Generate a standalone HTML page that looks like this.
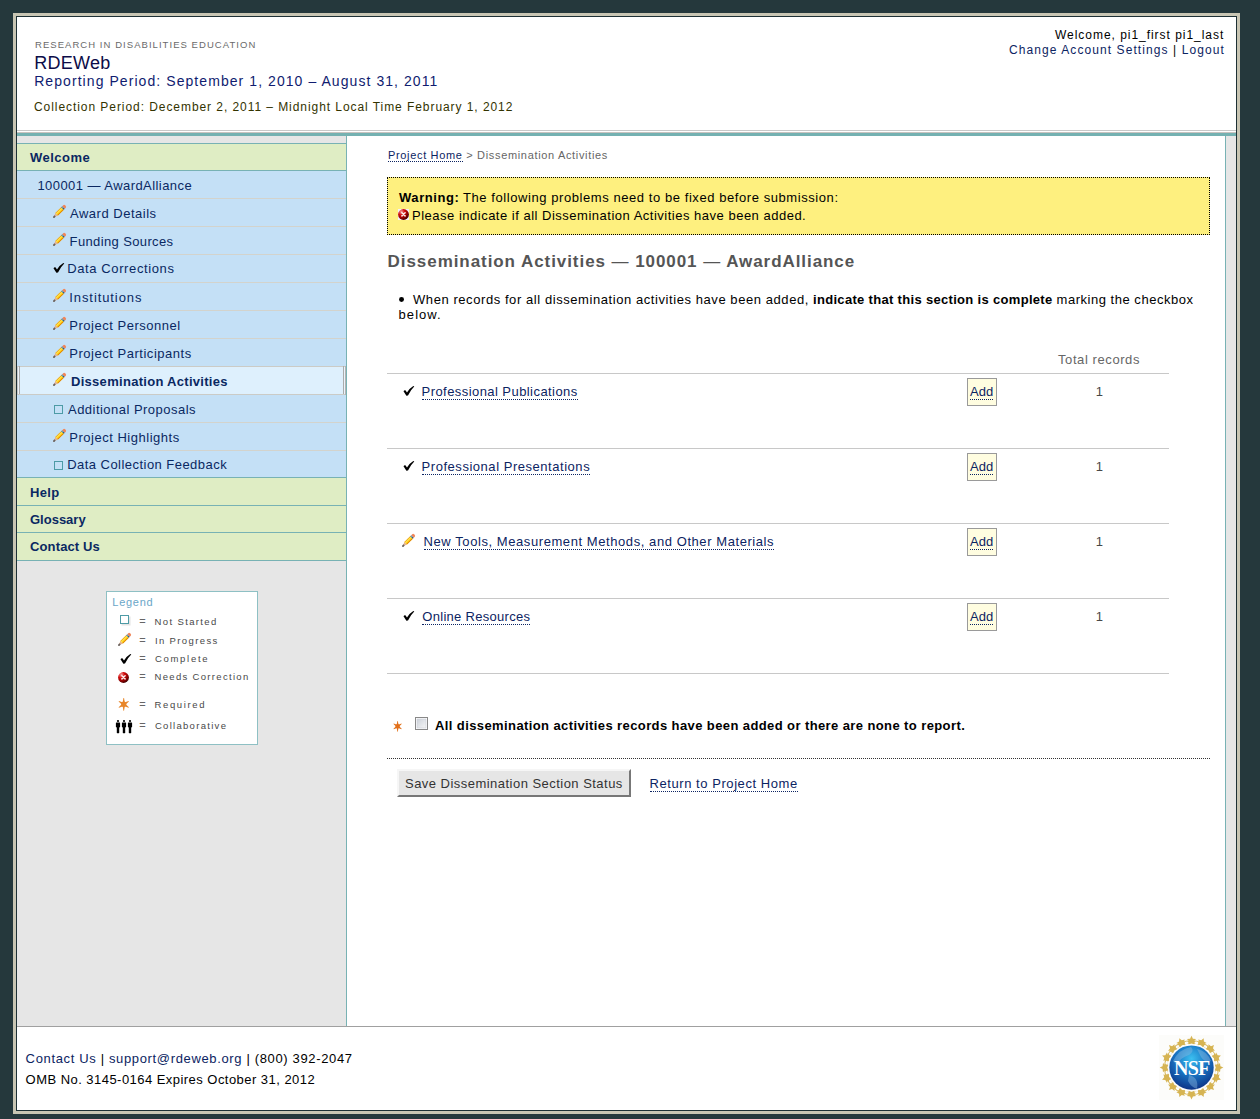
<!DOCTYPE html>
<html><head><meta charset="utf-8">
<style>
*{margin:0;padding:0;box-sizing:border-box}
html,body{width:1260px;height:1119px;overflow:hidden;background:#25383c;font-family:"Liberation Sans",sans-serif}
.a{position:absolute}
.t{position:absolute;white-space:nowrap}
.lk{color:#0c2462}
.dt{border-bottom:1px dotted #0c2462}
.sd{left:17px;width:329px}
.grn{background:#dfedc4}
.blu{background:#c4e0f6}
.tl{background:#78b2b4}
.sep{background:#d3d3cc}
svg{position:absolute;overflow:visible}

</style></head><body>
<div class="a" style="left:13px;top:13px;width:1227px;height:1101px;border:3px solid #c8c5b3"></div>
<div class="a" style="left:16px;top:16px;width:1221px;height:1095px;border:1px solid #1d3035;background:#fff"></div>

<div class="a" style="left:17px;top:130px;width:1219px;height:1px;background:#c8c8c8"></div>
<div class="a" style="left:17px;top:132px;width:1219px;height:1px;background:#c9c3c0"></div>
<div class="a" style="left:17px;top:133px;width:1219px;height:3px;background:#74b1b1"></div>

<div class="a" style="left:17px;top:136px;width:329px;height:890px;background:#e6e6e6"></div>
<div class="a tl" style="left:346px;top:136px;width:1px;height:890px"></div>
<div class="a tl" style="left:1225px;top:136px;width:1px;height:890px"></div>
<div class="a" style="left:1226px;top:136px;width:10px;height:890px;background:#e6e6e6"></div>
<div class="a" style="left:17px;top:1026px;width:1219px;height:1px;background:#a0a0a0"></div>

<div class="a tl sd" style="top:143px;height:1px"></div>
<div class="a grn sd" style="top:144px;height:26px"></div>
<div class="a tl sd" style="top:170px;height:1px"></div>
<div class="a blu sd" style="top:171px;height:306px"></div>
<div class="a sep sd" style="top:198px;height:1px"></div>
<div class="a sep sd" style="top:226px;height:1px"></div>
<div class="a sep sd" style="top:254px;height:1px"></div>
<div class="a sep sd" style="top:282px;height:1px"></div>
<div class="a sep sd" style="top:310px;height:1px"></div>
<div class="a sep sd" style="top:338px;height:1px"></div>
<div class="a sep sd" style="top:366px;height:1px"></div>
<div class="a sep sd" style="top:394px;height:1px"></div>
<div class="a sep sd" style="top:422px;height:1px"></div>
<div class="a sep sd" style="top:450px;height:1px"></div>
<div class="a" style="left:17px;top:367px;width:329px;height:27px;background:#def0fd"></div>
<div class="a" style="left:17px;top:366px;width:329px;height:1px;background:#cbcbc6"></div>
<div class="a" style="left:17px;top:394px;width:329px;height:1px;background:#cbcbc6"></div>
<div class="a" style="left:17px;top:366px;width:1px;height:29px;background:#c6c6c6"></div>
<div class="a" style="left:18px;top:367px;width:1px;height:27px;background:#eaf4fc"></div>
<div class="a" style="left:19px;top:366px;width:1px;height:28px;background:#ababab"></div>
<div class="a" style="left:343px;top:366px;width:1px;height:28px;background:#ababab"></div>
<div class="a" style="left:344px;top:367px;width:1px;height:27px;background:#eaf4fc"></div>
<div class="a" style="left:345px;top:366px;width:1px;height:29px;background:#b4b4b4"></div>
<div class="a tl sd" style="top:477px;height:1px"></div>
<div class="a grn sd" style="top:478px;height:82px"></div>
<div class="a tl sd" style="top:505px;height:1px"></div>
<div class="a tl sd" style="top:532px;height:1px"></div>
<div class="a tl sd" style="top:560px;height:1px"></div>

<div class="a" style="left:106px;top:591px;width:152px;height:154px;background:#fff;border:1px solid #8ec0c4"></div>

<div class="a" style="left:387px;top:177px;width:823px;height:58px;background:#fef07f;border:1px dotted #000"></div>

<div class="a" style="left:387px;top:373px;width:782px;height:1px;background:#c8c8c8"></div>
<div class="a" style="left:387px;top:448px;width:782px;height:1px;background:#c8c8c8"></div>
<div class="a" style="left:387px;top:523px;width:782px;height:1px;background:#c8c8c8"></div>
<div class="a" style="left:387px;top:598px;width:782px;height:1px;background:#c8c8c8"></div>
<div class="a" style="left:387px;top:673px;width:782px;height:1px;background:#c8c8c8"></div>

<div class="a" style="left:967px;top:378px;width:30px;height:28px;background:#fffde0;border:1px solid #9a9a9a"></div>
<div class="a" style="left:967px;top:453px;width:30px;height:28px;background:#fffde0;border:1px solid #9a9a9a"></div>
<div class="a" style="left:967px;top:528px;width:30px;height:28px;background:#fffde0;border:1px solid #9a9a9a"></div>
<div class="a" style="left:967px;top:603px;width:30px;height:28px;background:#fffde0;border:1px solid #9a9a9a"></div>

<div class="a" style="left:387px;top:758px;width:823px;height:1px;border-top:1px dotted #333"></div>

<div class="a" style="left:397px;top:769px;width:234px;height:28px;background:#e6e6e6;border:2px solid;border-color:#f6f6f6 #777 #777 #f6f6f6"></div>
<div class="a" style="left:399.3px;top:297.1px;width:5.2px;height:5px;border-radius:50%;background:#000"></div>

<svg style="left:53px;top:205px" width="13" height="13" viewBox="0 0 13 13">
<g transform="rotate(-45 6.5 6.5)">
<path d="M-2.0 6.5 L2.5 4.7 L2.5 8.3 Z" fill="#e4b090"/>
<path d="M-2.2 6.5 Q-2.2 5.6 -1.4 5.5 L0.2 5.6 L0.2 7.4 L-1.4 7.5 Q-2.2 7.4 -2.2 6.5 Z" fill="#6a625e"/>
<rect x="2.5" y="4.7" width="8.3" height="3.6" fill="#ffcc10"/>
<rect x="2.5" y="4.7" width="8.3" height="0.7" fill="#e89a20"/>
<rect x="2.5" y="5.4" width="8.3" height="1.1" fill="#ffe650"/>
<rect x="2.5" y="7.5" width="8.3" height="0.8" fill="#dc7800"/>
<rect x="10.8" y="4.7" width="1.4" height="3.6" fill="#2c6382"/>
<rect x="10.8" y="5.5" width="1.4" height="0.9" fill="#6fa8cc"/>
<path d="M12.2 4.7 H13.6 Q14.9 4.7 14.9 6.5 Q14.9 8.3 13.6 8.3 H12.2 Z" fill="#f0855a"/>
</g></svg>
<svg style="left:53px;top:233px" width="13" height="13" viewBox="0 0 13 13">
<g transform="rotate(-45 6.5 6.5)">
<path d="M-2.0 6.5 L2.5 4.7 L2.5 8.3 Z" fill="#e4b090"/>
<path d="M-2.2 6.5 Q-2.2 5.6 -1.4 5.5 L0.2 5.6 L0.2 7.4 L-1.4 7.5 Q-2.2 7.4 -2.2 6.5 Z" fill="#6a625e"/>
<rect x="2.5" y="4.7" width="8.3" height="3.6" fill="#ffcc10"/>
<rect x="2.5" y="4.7" width="8.3" height="0.7" fill="#e89a20"/>
<rect x="2.5" y="5.4" width="8.3" height="1.1" fill="#ffe650"/>
<rect x="2.5" y="7.5" width="8.3" height="0.8" fill="#dc7800"/>
<rect x="10.8" y="4.7" width="1.4" height="3.6" fill="#2c6382"/>
<rect x="10.8" y="5.5" width="1.4" height="0.9" fill="#6fa8cc"/>
<path d="M12.2 4.7 H13.6 Q14.9 4.7 14.9 6.5 Q14.9 8.3 13.6 8.3 H12.2 Z" fill="#f0855a"/>
</g></svg>
<svg style="left:53px;top:289px" width="13" height="13" viewBox="0 0 13 13">
<g transform="rotate(-45 6.5 6.5)">
<path d="M-2.0 6.5 L2.5 4.7 L2.5 8.3 Z" fill="#e4b090"/>
<path d="M-2.2 6.5 Q-2.2 5.6 -1.4 5.5 L0.2 5.6 L0.2 7.4 L-1.4 7.5 Q-2.2 7.4 -2.2 6.5 Z" fill="#6a625e"/>
<rect x="2.5" y="4.7" width="8.3" height="3.6" fill="#ffcc10"/>
<rect x="2.5" y="4.7" width="8.3" height="0.7" fill="#e89a20"/>
<rect x="2.5" y="5.4" width="8.3" height="1.1" fill="#ffe650"/>
<rect x="2.5" y="7.5" width="8.3" height="0.8" fill="#dc7800"/>
<rect x="10.8" y="4.7" width="1.4" height="3.6" fill="#2c6382"/>
<rect x="10.8" y="5.5" width="1.4" height="0.9" fill="#6fa8cc"/>
<path d="M12.2 4.7 H13.6 Q14.9 4.7 14.9 6.5 Q14.9 8.3 13.6 8.3 H12.2 Z" fill="#f0855a"/>
</g></svg>
<svg style="left:53px;top:317px" width="13" height="13" viewBox="0 0 13 13">
<g transform="rotate(-45 6.5 6.5)">
<path d="M-2.0 6.5 L2.5 4.7 L2.5 8.3 Z" fill="#e4b090"/>
<path d="M-2.2 6.5 Q-2.2 5.6 -1.4 5.5 L0.2 5.6 L0.2 7.4 L-1.4 7.5 Q-2.2 7.4 -2.2 6.5 Z" fill="#6a625e"/>
<rect x="2.5" y="4.7" width="8.3" height="3.6" fill="#ffcc10"/>
<rect x="2.5" y="4.7" width="8.3" height="0.7" fill="#e89a20"/>
<rect x="2.5" y="5.4" width="8.3" height="1.1" fill="#ffe650"/>
<rect x="2.5" y="7.5" width="8.3" height="0.8" fill="#dc7800"/>
<rect x="10.8" y="4.7" width="1.4" height="3.6" fill="#2c6382"/>
<rect x="10.8" y="5.5" width="1.4" height="0.9" fill="#6fa8cc"/>
<path d="M12.2 4.7 H13.6 Q14.9 4.7 14.9 6.5 Q14.9 8.3 13.6 8.3 H12.2 Z" fill="#f0855a"/>
</g></svg>
<svg style="left:53px;top:345px" width="13" height="13" viewBox="0 0 13 13">
<g transform="rotate(-45 6.5 6.5)">
<path d="M-2.0 6.5 L2.5 4.7 L2.5 8.3 Z" fill="#e4b090"/>
<path d="M-2.2 6.5 Q-2.2 5.6 -1.4 5.5 L0.2 5.6 L0.2 7.4 L-1.4 7.5 Q-2.2 7.4 -2.2 6.5 Z" fill="#6a625e"/>
<rect x="2.5" y="4.7" width="8.3" height="3.6" fill="#ffcc10"/>
<rect x="2.5" y="4.7" width="8.3" height="0.7" fill="#e89a20"/>
<rect x="2.5" y="5.4" width="8.3" height="1.1" fill="#ffe650"/>
<rect x="2.5" y="7.5" width="8.3" height="0.8" fill="#dc7800"/>
<rect x="10.8" y="4.7" width="1.4" height="3.6" fill="#2c6382"/>
<rect x="10.8" y="5.5" width="1.4" height="0.9" fill="#6fa8cc"/>
<path d="M12.2 4.7 H13.6 Q14.9 4.7 14.9 6.5 Q14.9 8.3 13.6 8.3 H12.2 Z" fill="#f0855a"/>
</g></svg>
<svg style="left:53px;top:373px" width="13" height="13" viewBox="0 0 13 13">
<g transform="rotate(-45 6.5 6.5)">
<path d="M-2.0 6.5 L2.5 4.7 L2.5 8.3 Z" fill="#e4b090"/>
<path d="M-2.2 6.5 Q-2.2 5.6 -1.4 5.5 L0.2 5.6 L0.2 7.4 L-1.4 7.5 Q-2.2 7.4 -2.2 6.5 Z" fill="#6a625e"/>
<rect x="2.5" y="4.7" width="8.3" height="3.6" fill="#ffcc10"/>
<rect x="2.5" y="4.7" width="8.3" height="0.7" fill="#e89a20"/>
<rect x="2.5" y="5.4" width="8.3" height="1.1" fill="#ffe650"/>
<rect x="2.5" y="7.5" width="8.3" height="0.8" fill="#dc7800"/>
<rect x="10.8" y="4.7" width="1.4" height="3.6" fill="#2c6382"/>
<rect x="10.8" y="5.5" width="1.4" height="0.9" fill="#6fa8cc"/>
<path d="M12.2 4.7 H13.6 Q14.9 4.7 14.9 6.5 Q14.9 8.3 13.6 8.3 H12.2 Z" fill="#f0855a"/>
</g></svg>
<svg style="left:53px;top:429px" width="13" height="13" viewBox="0 0 13 13">
<g transform="rotate(-45 6.5 6.5)">
<path d="M-2.0 6.5 L2.5 4.7 L2.5 8.3 Z" fill="#e4b090"/>
<path d="M-2.2 6.5 Q-2.2 5.6 -1.4 5.5 L0.2 5.6 L0.2 7.4 L-1.4 7.5 Q-2.2 7.4 -2.2 6.5 Z" fill="#6a625e"/>
<rect x="2.5" y="4.7" width="8.3" height="3.6" fill="#ffcc10"/>
<rect x="2.5" y="4.7" width="8.3" height="0.7" fill="#e89a20"/>
<rect x="2.5" y="5.4" width="8.3" height="1.1" fill="#ffe650"/>
<rect x="2.5" y="7.5" width="8.3" height="0.8" fill="#dc7800"/>
<rect x="10.8" y="4.7" width="1.4" height="3.6" fill="#2c6382"/>
<rect x="10.8" y="5.5" width="1.4" height="0.9" fill="#6fa8cc"/>
<path d="M12.2 4.7 H13.6 Q14.9 4.7 14.9 6.5 Q14.9 8.3 13.6 8.3 H12.2 Z" fill="#f0855a"/>
</g></svg>
<svg style="left:53px;top:262px" width="11.0" height="11.0" viewBox="0 0 11 11">
<path d="M0.5 6.2 Q1.3 5.0 2.4 5.3 L4.0 7.5 Q6.6 3.2 10.3 1.0 L11.3 1.5 Q7.8 4.6 5.0 10.5 L3.4 10.7 Z" fill="#000"/>
</svg>
<svg style="left:54px;top:405px" width="11" height="11" viewBox="0 0 11 11">
<rect x="0.5" y="0.5" width="8" height="8" fill="none" stroke="#4d9ba6" stroke-width="1"/>
</svg>
<svg style="left:54px;top:461px" width="11" height="11" viewBox="0 0 11 11">
<rect x="0.5" y="0.5" width="8" height="8" fill="none" stroke="#4d9ba6" stroke-width="1"/>
</svg>
<svg style="left:120px;top:615px" width="11" height="11" viewBox="0 0 11 11"><rect x="1.5" y="1.5" width="9" height="9" fill="#e4e4e4"/>
<rect x="0.5" y="0.5" width="8" height="8" fill="#fff" stroke="#4d9ba6" stroke-width="1"/>
</svg>
<svg style="left:118px;top:633px" width="13" height="13" viewBox="0 0 13 13">
<g transform="rotate(-45 6.5 6.5)">
<path d="M-2.0 6.5 L2.5 4.7 L2.5 8.3 Z" fill="#e4b090"/>
<path d="M-2.2 6.5 Q-2.2 5.6 -1.4 5.5 L0.2 5.6 L0.2 7.4 L-1.4 7.5 Q-2.2 7.4 -2.2 6.5 Z" fill="#6a625e"/>
<rect x="2.5" y="4.7" width="8.3" height="3.6" fill="#ffcc10"/>
<rect x="2.5" y="4.7" width="8.3" height="0.7" fill="#e89a20"/>
<rect x="2.5" y="5.4" width="8.3" height="1.1" fill="#ffe650"/>
<rect x="2.5" y="7.5" width="8.3" height="0.8" fill="#dc7800"/>
<rect x="10.8" y="4.7" width="1.4" height="3.6" fill="#2c6382"/>
<rect x="10.8" y="5.5" width="1.4" height="0.9" fill="#6fa8cc"/>
<path d="M12.2 4.7 H13.6 Q14.9 4.7 14.9 6.5 Q14.9 8.3 13.6 8.3 H12.2 Z" fill="#f0855a"/>
</g></svg>
<svg style="left:119.5px;top:652.5px" width="11.0" height="11.0" viewBox="0 0 11 11">
<path d="M0.5 6.2 Q1.3 5.0 2.4 5.3 L4.0 7.5 Q6.6 3.2 10.3 1.0 L11.3 1.5 Q7.8 4.6 5.0 10.5 L3.4 10.7 Z" fill="#000"/>
</svg>
<svg style="left:118px;top:671.5px" width="12" height="12" viewBox="0 0 12 12">
<defs><radialGradient id="rg118671.5" cx="0.3" cy="0.25" r="0.85"><stop offset="0" stop-color="#f2a0a0"/><stop offset="0.35" stop-color="#d40c0c"/><stop offset="0.7" stop-color="#8c0000"/><stop offset="1" stop-color="#2a0000"/></radialGradient></defs>
<rect x="0" y="0" width="11" height="11" fill="#fff"/>
<circle cx="5.5" cy="5.5" r="5.4" fill="url(#rg118671.5)"/>
<path d="M3.9 3.7 L7.1 6.9 M7.1 3.7 L3.9 6.9" stroke="#fff" stroke-width="1.5" stroke-linecap="round" opacity="0.92"/>
</svg>
<svg style="left:117.8px;top:698.2px" width="11.5" height="12.7" viewBox="-6 -6 12 12" preserveAspectRatio="none">
<g fill="#e8862a">
<path d="M-1.5 0 L-0.3 -6 L0.3 -6 L1.5 0 L0.3 6 L-0.3 6 Z"/>
<path d="M-1.5 0 L-0.3 -6 L0.3 -6 L1.5 0 L0.3 6 L-0.3 6 Z" transform="rotate(60)"/>
<path d="M-1.5 0 L-0.3 -6 L0.3 -6 L1.5 0 L0.3 6 L-0.3 6 Z" transform="rotate(-60)"/>
<circle r="2.6"/>
</g></svg>
<svg style="left:115px;top:719.5px" width="18" height="14" viewBox="0 0 18 14"><g fill="#000">
<ellipse cx="3" cy="1.0" rx="1.1" ry="0.95"/>
<path d="M0.8999999999999999 2.9 Q0.8999999999999999 2.4 1.4 2.4 H4.6 Q5.1 2.4 5.1 2.9 V7.0 L4.2 7.6 V13.0 Q3 13.4 1.8 13.0 V7.6 L0.8999999999999999 7.0 Z"/><ellipse cx="9" cy="1.0" rx="1.1" ry="0.95"/>
<path d="M6.9 2.9 Q6.9 2.4 7.4 2.4 H10.6 Q11.1 2.4 11.1 2.9 V7.0 L10.2 7.6 V13.0 Q9 13.4 7.8 13.0 V7.6 L6.9 7.0 Z"/><ellipse cx="15" cy="1.0" rx="1.1" ry="0.95"/>
<path d="M12.9 2.9 Q12.9 2.4 13.4 2.4 H16.6 Q17.1 2.4 17.1 2.9 V7.0 L16.2 7.6 V13.0 Q15 13.4 13.8 13.0 V7.6 L12.9 7.0 Z"/>
</g></svg>
<svg style="left:398px;top:209px" width="12" height="12" viewBox="0 0 12 12">
<defs><radialGradient id="rg398209" cx="0.3" cy="0.25" r="0.85"><stop offset="0" stop-color="#f2a0a0"/><stop offset="0.35" stop-color="#d40c0c"/><stop offset="0.7" stop-color="#8c0000"/><stop offset="1" stop-color="#2a0000"/></radialGradient></defs>
<rect x="0" y="0" width="11" height="11" fill="#f4f2fa"/>
<circle cx="5.5" cy="5.5" r="5.4" fill="url(#rg398209)"/>
<path d="M3.9 3.7 L7.1 6.9 M7.1 3.7 L3.9 6.9" stroke="#fff" stroke-width="1.5" stroke-linecap="round" opacity="0.92"/>
</svg>
<svg style="left:402.5px;top:385.2px" width="11.0" height="11.0" viewBox="0 0 11 11">
<path d="M0.5 6.2 Q1.3 5.0 2.4 5.3 L4.0 7.5 Q6.6 3.2 10.3 1.0 L11.3 1.5 Q7.8 4.6 5.0 10.5 L3.4 10.7 Z" fill="#000"/>
</svg>
<svg style="left:402.5px;top:460.2px" width="11.0" height="11.0" viewBox="0 0 11 11">
<path d="M0.5 6.2 Q1.3 5.0 2.4 5.3 L4.0 7.5 Q6.6 3.2 10.3 1.0 L11.3 1.5 Q7.8 4.6 5.0 10.5 L3.4 10.7 Z" fill="#000"/>
</svg>
<svg style="left:402px;top:534px" width="13" height="13" viewBox="0 0 13 13">
<g transform="rotate(-45 6.5 6.5)">
<path d="M-2.0 6.5 L2.5 4.7 L2.5 8.3 Z" fill="#e4b090"/>
<path d="M-2.2 6.5 Q-2.2 5.6 -1.4 5.5 L0.2 5.6 L0.2 7.4 L-1.4 7.5 Q-2.2 7.4 -2.2 6.5 Z" fill="#6a625e"/>
<rect x="2.5" y="4.7" width="8.3" height="3.6" fill="#ffcc10"/>
<rect x="2.5" y="4.7" width="8.3" height="0.7" fill="#e89a20"/>
<rect x="2.5" y="5.4" width="8.3" height="1.1" fill="#ffe650"/>
<rect x="2.5" y="7.5" width="8.3" height="0.8" fill="#dc7800"/>
<rect x="10.8" y="4.7" width="1.4" height="3.6" fill="#2c6382"/>
<rect x="10.8" y="5.5" width="1.4" height="0.9" fill="#6fa8cc"/>
<path d="M12.2 4.7 H13.6 Q14.9 4.7 14.9 6.5 Q14.9 8.3 13.6 8.3 H12.2 Z" fill="#f0855a"/>
</g></svg>
<svg style="left:402.5px;top:610.2px" width="11.0" height="11.0" viewBox="0 0 11 11">
<path d="M0.5 6.2 Q1.3 5.0 2.4 5.3 L4.0 7.5 Q6.6 3.2 10.3 1.0 L11.3 1.5 Q7.8 4.6 5.0 10.5 L3.4 10.7 Z" fill="#000"/>
</svg>
<svg style="left:392.9px;top:720.7px" width="9.2" height="10.7" viewBox="-6 -6 12 12" preserveAspectRatio="none">
<g fill="#e2701a">
<path d="M-1.5 0 L-0.3 -6 L0.3 -6 L1.5 0 L0.3 6 L-0.3 6 Z"/>
<path d="M-1.5 0 L-0.3 -6 L0.3 -6 L1.5 0 L0.3 6 L-0.3 6 Z" transform="rotate(60)"/>
<path d="M-1.5 0 L-0.3 -6 L0.3 -6 L1.5 0 L0.3 6 L-0.3 6 Z" transform="rotate(-60)"/>
<circle r="2.6"/>
</g></svg>
<svg style="left:415px;top:717px" width="13" height="13" viewBox="0 0 13 13">
<defs><linearGradient id="cbg" x1="0" y1="0" x2="1" y2="1"><stop offset="0" stop-color="#cdd2da"/><stop offset="1" stop-color="#f6f6f6"/></linearGradient></defs>
<rect x="0.5" y="0.5" width="12" height="12" fill="#fff" stroke="#888" stroke-width="1"/>
<rect x="2" y="2" width="9" height="9" fill="url(#cbg)" stroke="#c9ced6" stroke-width="0.6"/>
</svg>
<svg style="left:1159px;top:1035px" width="65" height="65" viewBox="0 0 65 65">
<defs><radialGradient id="nsfg" cx="0.5" cy="0.3" r="0.75"><stop offset="0" stop-color="#3cc0f0"/><stop offset="0.45" stop-color="#1a78c6"/><stop offset="1" stop-color="#0a2a7e"/></radialGradient></defs>
<rect width="65" height="65" fill="#fcfcfa"/>
<circle cx="32.5" cy="32.6" r="25.8" fill="none" stroke="#d6b452" stroke-width="3.2"/>
<g fill="#d6b452"><polygon points="32.50,0.80 33.91,3.66 37.07,4.12 34.78,6.34 35.32,9.48 32.50,8.00 29.68,9.48 30.22,6.34 27.93,4.12 31.09,3.66"/><polygon points="44.67,3.22 44.88,6.40 47.62,8.03 44.66,9.21 43.95,12.32 41.91,9.87 38.74,10.16 40.44,7.47 39.18,4.54 42.27,5.32"/><polygon points="54.99,10.11 53.96,13.13 55.87,15.69 52.68,15.65 50.84,18.25 49.89,15.21 46.85,14.26 49.45,12.42 49.41,9.23 51.97,11.14"/><polygon points="61.88,20.43 59.78,22.83 60.56,25.92 57.63,24.66 54.94,26.36 55.23,23.19 52.78,21.15 55.89,20.44 57.07,17.48 58.70,20.22"/><polygon points="64.30,32.60 61.44,34.01 60.98,37.17 58.76,34.88 55.62,35.42 57.10,32.60 55.62,29.78 58.76,30.32 60.98,28.03 61.44,31.19"/><polygon points="61.88,44.77 58.70,44.98 57.07,47.72 55.89,44.76 52.78,44.05 55.23,42.01 54.94,38.84 57.63,40.54 60.56,39.28 59.78,42.37"/><polygon points="54.99,55.09 51.97,54.06 49.41,55.97 49.45,52.78 46.85,50.94 49.89,49.99 50.84,46.95 52.68,49.55 55.87,49.51 53.96,52.07"/><polygon points="44.67,61.98 42.27,59.88 39.18,60.66 40.44,57.73 38.74,55.04 41.91,55.33 43.95,52.88 44.66,55.99 47.62,57.17 44.88,58.80"/><polygon points="32.50,64.40 31.09,61.54 27.93,61.08 30.22,58.86 29.68,55.72 32.50,57.20 35.32,55.72 34.78,58.86 37.07,61.08 33.91,61.54"/><polygon points="20.33,61.98 20.12,58.80 17.38,57.17 20.34,55.99 21.05,52.88 23.09,55.33 26.26,55.04 24.56,57.73 25.82,60.66 22.73,59.88"/><polygon points="10.01,55.09 11.04,52.07 9.13,49.51 12.32,49.55 14.16,46.95 15.11,49.99 18.15,50.94 15.55,52.78 15.59,55.97 13.03,54.06"/><polygon points="3.12,44.77 5.22,42.37 4.44,39.28 7.37,40.54 10.06,38.84 9.77,42.01 12.22,44.05 9.11,44.76 7.93,47.72 6.30,44.98"/><polygon points="0.70,32.60 3.56,31.19 4.02,28.03 6.24,30.32 9.38,29.78 7.90,32.60 9.38,35.42 6.24,34.88 4.02,37.17 3.56,34.01"/><polygon points="3.12,20.43 6.30,20.22 7.93,17.48 9.11,20.44 12.22,21.15 9.77,23.19 10.06,26.36 7.37,24.66 4.44,25.92 5.22,22.83"/><polygon points="10.01,10.11 13.03,11.14 15.59,9.23 15.55,12.42 18.15,14.26 15.11,15.21 14.16,18.25 12.32,15.65 9.13,15.69 11.04,13.13"/><polygon points="20.33,3.22 22.73,5.32 25.82,4.54 24.56,7.47 26.26,10.16 23.09,9.87 21.05,12.32 20.34,9.21 17.38,8.03 20.12,6.40"/></g>
<g fill="#fcfcfa"><ellipse cx="37.44" cy="7.79" rx="1.9" ry="1.25" transform="rotate(11.2 37.44 7.79)"/><ellipse cx="46.56" cy="11.56" rx="1.9" ry="1.25" transform="rotate(33.8 46.56 11.56)"/><ellipse cx="53.54" cy="18.54" rx="1.9" ry="1.25" transform="rotate(56.2 53.54 18.54)"/><ellipse cx="57.31" cy="27.66" rx="1.9" ry="1.25" transform="rotate(78.8 57.31 27.66)"/><ellipse cx="57.31" cy="37.54" rx="1.9" ry="1.25" transform="rotate(101.2 57.31 37.54)"/><ellipse cx="53.54" cy="46.66" rx="1.9" ry="1.25" transform="rotate(123.8 53.54 46.66)"/><ellipse cx="46.56" cy="53.64" rx="1.9" ry="1.25" transform="rotate(146.2 46.56 53.64)"/><ellipse cx="37.44" cy="57.41" rx="1.9" ry="1.25" transform="rotate(168.8 37.44 57.41)"/><ellipse cx="27.56" cy="57.41" rx="1.9" ry="1.25" transform="rotate(191.2 27.56 57.41)"/><ellipse cx="18.44" cy="53.64" rx="1.9" ry="1.25" transform="rotate(213.8 18.44 53.64)"/><ellipse cx="11.46" cy="46.66" rx="1.9" ry="1.25" transform="rotate(236.2 11.46 46.66)"/><ellipse cx="7.69" cy="37.54" rx="1.9" ry="1.25" transform="rotate(258.8 7.69 37.54)"/><ellipse cx="7.69" cy="27.66" rx="1.9" ry="1.25" transform="rotate(281.2 7.69 27.66)"/><ellipse cx="11.46" cy="18.54" rx="1.9" ry="1.25" transform="rotate(303.8 11.46 18.54)"/><ellipse cx="18.44" cy="11.56" rx="1.9" ry="1.25" transform="rotate(326.2 18.44 11.56)"/><ellipse cx="27.56" cy="7.79" rx="1.9" ry="1.25" transform="rotate(348.8 27.56 7.79)"/></g>
<circle cx="32.5" cy="32.6" r="23.2" fill="#fcfcfa"/>
<circle cx="32.5" cy="32.6" r="22.2" fill="url(#nsfg)"/>
<path d="M14 26 Q20 14 32 12 Q36 16 30 20 Q22 22 18 30 Z M38 14 Q48 16 52 26 Q46 28 42 22 Z M30 40 Q40 42 38 54 Q32 52 29 46 Z" fill="#8ab8e0" opacity="0.45"/>
<text x="32.7" y="40.2" text-anchor="middle" font-family="Liberation Serif" font-weight="bold" font-size="20" fill="#fff" letter-spacing="-0.8">NSF</text>
</svg>
<div class="t" id="h1" style="left:35.00px;top:35.00px;font-size:9.5px;font-weight:400;color:#6a6a6a;letter-spacing:1.049px;line-height:20px">RESEARCH IN DISABILITIES EDUCATION</div>
<div class="t" id="h2" style="left:34.20px;top:53.00px;font-size:18px;font-weight:400;color:#0c0c48;letter-spacing:0.280px;line-height:20px">RDEWeb</div>
<div class="t" id="h3" style="left:34.20px;top:71.00px;font-size:14px;font-weight:400;color:#101c70;letter-spacing:1.067px;line-height:20px">Reporting Period: September 1, 2010 – August 31, 2011</div>
<div class="t" id="h4" style="left:34.00px;top:97.00px;font-size:12px;font-weight:400;color:#333300;letter-spacing:0.937px;line-height:20px">Collection Period: December 2, 2011 – Midnight Local Time February 1, 2012</div>
<div class="t" id="h5" style="left:1055.00px;top:25.00px;font-size:12px;font-weight:400;color:#000;letter-spacing:0.965px;line-height:20px">Welcome, pi1_first pi1_last</div>
<div class="t" id="h6" style="left:1009.00px;top:40.00px;font-size:12px;font-weight:400;color:#000;letter-spacing:1.081px;line-height:20px"><span class="lk">Change Account Settings</span> | <span class="lk">Logout</span></div>
<div class="t" id="s0" style="left:30.00px;top:148.00px;font-size:13px;font-weight:700;color:#0a2862;letter-spacing:0.483px;line-height:20px">Welcome</div>
<div class="t" id="s1" style="left:37.40px;top:176.00px;font-size:13px;font-weight:400;color:#0a2862;letter-spacing:0.443px;line-height:20px">100001 — AwardAlliance</div>
<div class="t" id="s2" style="left:70.00px;top:204.00px;font-size:13px;font-weight:400;color:#0a2862;letter-spacing:0.508px;line-height:20px">Award Details</div>
<div class="t" id="s3" style="left:69.60px;top:232.00px;font-size:13px;font-weight:400;color:#0a2862;letter-spacing:0.371px;line-height:20px">Funding Sources</div>
<div class="t" id="s4" style="left:67.20px;top:259.00px;font-size:13px;font-weight:400;color:#0a2862;letter-spacing:0.613px;line-height:20px">Data Corrections</div>
<div class="t" id="s5" style="left:69.30px;top:288.00px;font-size:13px;font-weight:400;color:#0a2862;letter-spacing:0.909px;line-height:20px">Institutions</div>
<div class="t" id="s6" style="left:69.30px;top:316.00px;font-size:13px;font-weight:400;color:#0a2862;letter-spacing:0.513px;line-height:20px">Project Personnel</div>
<div class="t" id="s7" style="left:69.30px;top:344.00px;font-size:13px;font-weight:400;color:#0a2862;letter-spacing:0.521px;line-height:20px">Project Participants</div>
<div class="t" id="s8" style="left:71.00px;top:372.00px;font-size:13px;font-weight:700;color:#0a2862;letter-spacing:0.291px;line-height:20px">Dissemination Activities</div>
<div class="t" id="s9" style="left:68.00px;top:400.00px;font-size:13px;font-weight:400;color:#0a2862;letter-spacing:0.474px;line-height:20px">Additional Proposals</div>
<div class="t" id="s10" style="left:69.30px;top:428.00px;font-size:13px;font-weight:400;color:#0a2862;letter-spacing:0.512px;line-height:20px">Project Highlights</div>
<div class="t" id="s11" style="left:67.20px;top:455.00px;font-size:13px;font-weight:400;color:#0a2862;letter-spacing:0.461px;line-height:20px">Data Collection Feedback</div>
<div class="t" id="s12" style="left:30.00px;top:483.00px;font-size:13px;font-weight:700;color:#0a2862;letter-spacing:0.300px;line-height:20px">Help</div>
<div class="t" id="s13" style="left:30.00px;top:510.00px;font-size:13px;font-weight:700;color:#0a2862;letter-spacing:0.000px;line-height:20px">Glossary</div>
<div class="t" id="s14" style="left:30.00px;top:537.00px;font-size:13px;font-weight:700;color:#0a2862;letter-spacing:0.133px;line-height:20px">Contact Us</div>
<div class="t" id="l0" style="left:112.30px;top:592.40px;font-size:11px;font-weight:400;color:#6aa6c8;letter-spacing:0.720px;line-height:20px">Legend</div>
<div class="t" id="l1e" style="left:139.20px;top:611.00px;font-size:11px;font-weight:400;color:#666;letter-spacing:0.000px;line-height:20px">=</div>
<div class="t" id="l1" style="left:154.60px;top:612.00px;font-size:9.5px;font-weight:400;color:#484848;letter-spacing:1.360px;line-height:20px">Not Started</div>
<div class="t" id="l2e" style="left:139.20px;top:629.50px;font-size:11px;font-weight:400;color:#666;letter-spacing:0.000px;line-height:20px">=</div>
<div class="t" id="l2" style="left:154.90px;top:630.50px;font-size:9.5px;font-weight:400;color:#484848;letter-spacing:1.380px;line-height:20px">In Progress</div>
<div class="t" id="l3e" style="left:139.20px;top:648.00px;font-size:11px;font-weight:400;color:#666;letter-spacing:0.000px;line-height:20px">=</div>
<div class="t" id="l3" style="left:154.90px;top:649.00px;font-size:9.5px;font-weight:400;color:#484848;letter-spacing:1.714px;line-height:20px">Complete</div>
<div class="t" id="l4e" style="left:139.20px;top:666.00px;font-size:11px;font-weight:400;color:#666;letter-spacing:0.000px;line-height:20px">=</div>
<div class="t" id="l4" style="left:154.60px;top:667.00px;font-size:9.5px;font-weight:400;color:#484848;letter-spacing:1.313px;line-height:20px">Needs Correction</div>
<div class="t" id="l5e" style="left:139.20px;top:694.00px;font-size:11px;font-weight:400;color:#666;letter-spacing:0.000px;line-height:20px">=</div>
<div class="t" id="l5" style="left:154.60px;top:695.00px;font-size:9.5px;font-weight:400;color:#484848;letter-spacing:1.614px;line-height:20px">Required</div>
<div class="t" id="l6e" style="left:139.20px;top:715.00px;font-size:11px;font-weight:400;color:#666;letter-spacing:0.000px;line-height:20px">=</div>
<div class="t" id="l6" style="left:154.90px;top:716.00px;font-size:9.5px;font-weight:400;color:#484848;letter-spacing:1.300px;line-height:20px">Collaborative</div>
<div class="t" id="c0" style="left:388.00px;top:145.20px;font-size:11px;font-weight:400;color:#666;letter-spacing:0.663px;line-height:20px"><span class="lk dt">Project Home</span> &gt; Dissemination Activities</div>
<div class="t" id="w1" style="left:399.00px;top:188.00px;font-size:13px;font-weight:700;color:#000;letter-spacing:0.570px;line-height:20px">Warning:</div>
<div class="t" id="w1b" style="left:463.00px;top:188.00px;font-size:13px;font-weight:400;color:#000;letter-spacing:0.570px;line-height:20px">The following problems need to be fixed before submission:</div>
<div class="t" id="w2" style="left:412.00px;top:205.50px;font-size:13px;font-weight:400;color:#000;letter-spacing:0.503px;line-height:20px">Please indicate if all Dissemination Activities have been added.</div>
<div class="t" id="hd" style="left:387.60px;top:252.00px;font-size:17px;font-weight:700;color:#555;letter-spacing:0.935px;line-height:20px">Dissemination Activities <span style="font-weight:400">—</span> 100001 <span style="font-weight:400">—</span> AwardAlliance</div>
<div class="t" id="p1" style="left:413.00px;top:290.00px;font-size:13px;font-weight:400;color:#000;letter-spacing:0.570px;line-height:20px">When records for all dissemination activities have been added,</div>
<div class="t" id="p1b" style="left:813.00px;top:290.00px;font-size:13px;font-weight:700;color:#000;letter-spacing:0.316px;line-height:20px">indicate that this section is complete</div>
<div class="t" id="p1c" style="left:1056.60px;top:290.00px;font-size:13px;font-weight:400;color:#000;letter-spacing:0.520px;line-height:20px">marking the checkbox</div>
<div class="t" id="p2" style="left:398.60px;top:305.00px;font-size:13px;font-weight:400;color:#000;letter-spacing:1.040px;line-height:20px">below.</div>
<div class="t" id="tr" style="left:1058.00px;top:350.00px;font-size:13px;font-weight:400;color:#666;letter-spacing:0.583px;line-height:20px">Total records</div>
<div class="t" id="r1" style="left:421.60px;top:382.00px;font-size:13px;font-weight:400;color:#0c2462;letter-spacing:0.433px;line-height:20px"><span class="lk dt">Professional Publications</span></div>
<div class="t" id="r2" style="left:421.60px;top:457.00px;font-size:13px;font-weight:400;color:#0c2462;letter-spacing:0.536px;line-height:20px"><span class="lk dt">Professional Presentations</span></div>
<div class="t" id="r3" style="left:423.60px;top:532.00px;font-size:13px;font-weight:400;color:#0c2462;letter-spacing:0.574px;line-height:20px"><span class="lk dt">New Tools, Measurement Methods, and Other Materials</span></div>
<div class="t" id="r4" style="left:422.30px;top:607.00px;font-size:13px;font-weight:400;color:#0c2462;letter-spacing:0.293px;line-height:20px"><span class="lk dt">Online Resources</span></div>
<div class="t" id="a1" style="left:970.00px;top:382.00px;font-size:13px;font-weight:400;color:#0c2462;letter-spacing:0.000px;line-height:20px"><span class="lk dt">Add</span></div>
<div class="t" id="a2" style="left:970.00px;top:457.00px;font-size:13px;font-weight:400;color:#0c2462;letter-spacing:0.000px;line-height:20px"><span class="lk dt">Add</span></div>
<div class="t" id="a3" style="left:970.00px;top:532.00px;font-size:13px;font-weight:400;color:#0c2462;letter-spacing:0.000px;line-height:20px"><span class="lk dt">Add</span></div>
<div class="t" id="a4" style="left:970.00px;top:607.00px;font-size:13px;font-weight:400;color:#0c2462;letter-spacing:0.000px;line-height:20px"><span class="lk dt">Add</span></div>
<div class="t" id="n1" style="left:1095.70px;top:382.00px;font-size:13px;font-weight:400;color:#484848;letter-spacing:0.000px;line-height:20px">1</div>
<div class="t" id="n2" style="left:1095.70px;top:457.00px;font-size:13px;font-weight:400;color:#484848;letter-spacing:0.000px;line-height:20px">1</div>
<div class="t" id="n3" style="left:1095.70px;top:532.00px;font-size:13px;font-weight:400;color:#484848;letter-spacing:0.000px;line-height:20px">1</div>
<div class="t" id="n4" style="left:1095.70px;top:607.00px;font-size:13px;font-weight:400;color:#484848;letter-spacing:0.000px;line-height:20px">1</div>
<div class="t" id="cb" style="left:435.00px;top:716.00px;font-size:13px;font-weight:700;color:#000;letter-spacing:0.400px;line-height:20px">All dissemination activities records have been added or there are none to report.</div>
<div class="t" id="bt" style="left:405.00px;top:774.00px;font-size:13px;font-weight:400;color:#333;letter-spacing:0.469px;line-height:20px">Save Dissemination Section Status</div>
<div class="t" id="rt" style="left:649.60px;top:774.00px;font-size:13px;font-weight:400;color:#0c2462;letter-spacing:0.557px;line-height:20px"><span class="lk dt">Return to Project Home</span></div>
<div class="t" id="f0" style="left:25.60px;top:1049.00px;font-size:13px;font-weight:400;color:#000;letter-spacing:0.647px;line-height:20px"><span class="lk">Contact Us</span> | <span class="lk">support@rdeweb.org</span> | (800) 392-2047</div>
<div class="t" id="f1" style="left:25.60px;top:1070.00px;font-size:13px;font-weight:400;color:#000;letter-spacing:0.459px;line-height:20px">OMB No. 3145-0164 Expires October 31, 2012</div>
</body></html>
